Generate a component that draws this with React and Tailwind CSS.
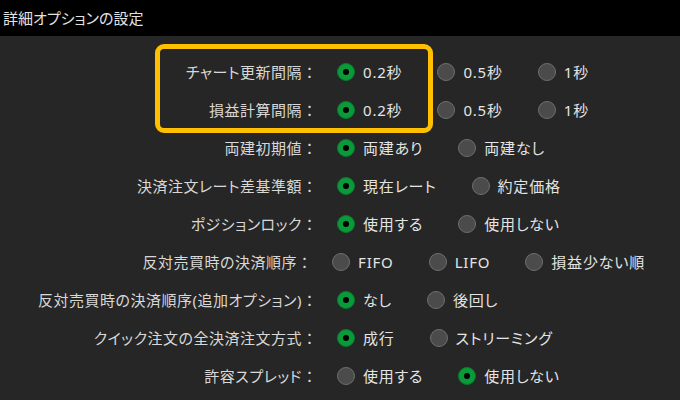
import React from 'react';

const rows = [
  { label: 'チャート更新間隔', options: ['0.2秒', '0.5秒', '1秒'], selected: 0 },
  { label: '損益計算間隔', options: ['0.2秒', '0.5秒', '1秒'], selected: 0 },
  { label: '両建初期値', options: ['両建あり', '両建なし'], selected: 0 },
  { label: '決済注文レート差基準額', options: ['現在レート', '約定価格'], selected: 0 },
  { label: 'ポジションロック', options: ['使用する', '使用しない'], selected: 0 },
  { label: '反対売買時の決済順序', options: ['FIFO', 'LIFO', '損益少ない順'], selected: -1 },
  { label: '反対売買時の決済順序(追加オプション)', options: ['なし', '後回し'], selected: 0 },
  { label: 'クイック注文の全決済注文方式', options: ['成行', 'ストリーミング'], selected: 0 },
  { label: '許容スプレッド', options: ['使用する', '使用しない'], selected: 1 },
];

const Radio = ({ checked }) =>
  checked ? (
    <span className="w-[18px] h-[18px] rounded-full bg-[#0b9a3a] border border-[#087a2d] flex items-center justify-center flex-shrink-0">
      <span className="w-[6px] h-[6px] rounded-full bg-black" />
    </span>
  ) : (
    <span className="w-[18px] h-[18px] rounded-full bg-[#4b4b4b] border border-[#6e6e6e] flex-shrink-0" />
  );

const SettingRow = ({ label, options, selected }) => (
  <div className="h-[38px] flex items-center">
    <div className="w-[317px] flex justify-end text-[#d8d8d8] whitespace-nowrap">
      <span className="tracking-[0.5px]">{label}</span>
      <span className="w-[15px] text-center [font-feature-settings:normal]">：</span>
    </div>
    <div className="ml-[20px] flex items-center">
      {options.map((opt, i) => (
        <div key={opt} className="flex items-center mr-[35px]">
          <Radio checked={i === selected} />
          <span className="ml-[8px] text-[#e4e4e4] whitespace-nowrap tracking-[0.8px]">{opt}</span>
        </div>
      ))}
    </div>
  </div>
);

export default function App() {
  return (
    <div className="w-[680px] h-[400px] overflow-hidden bg-[#262626] text-[15px] leading-none [font-family:'Noto_Sans','Noto_Sans_CJK_JP',sans-serif] [font-feature-settings:'palt']">
      <div className="h-[36px] bg-black flex items-center pl-[3px] text-[#e2e2e2]">詳細オプションの設定</div>
      <div className="pt-[17px]">
        <div className="relative">
          <span className="absolute left-[155px] top-[-9px] w-[278px] h-[89px] border-[5px] border-[#ffc000] rounded-[9px] pointer-events-none" />
          <SettingRow {...rows[0]} />
          <SettingRow {...rows[1]} />
        </div>
        {rows.slice(2).map((r) => (
          <SettingRow key={r.label} {...r} />
        ))}
      </div>
    </div>
  );
}
